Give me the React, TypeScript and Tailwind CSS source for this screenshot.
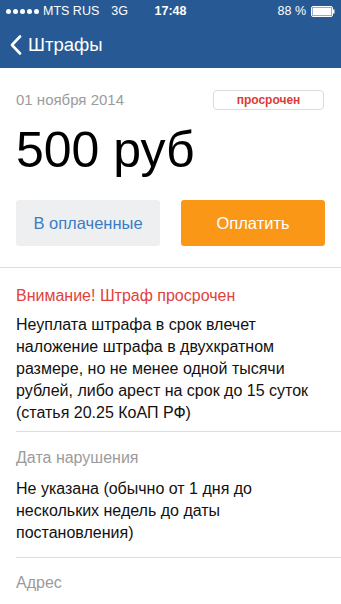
import React from "react";

export default function App() {
  return (
    <div className="w-[341px] min-h-[604px] bg-white overflow-hidden font-['Liberation_Sans','Arimo',Arial,Helvetica,sans-serif]">
      <div className="bg-[#275a94] h-[68px] text-white">
        <div className="relative h-[22px] flex items-center px-[6px] text-[12.5px]">
          <div className="flex items-center gap-[2px]">
            {[0, 1, 2, 3, 4].map((i) => (
              <span key={i} className="block w-[5px] h-[5px] rounded-full bg-white" />
            ))}
          </div>
          <span className="ml-[4px]">MTS RUS</span>
          <span className="ml-[12px]">3G</span>
          <span className="absolute left-1/2 -translate-x-1/2 font-bold">17:48</span>
          <div className="ml-auto flex items-center gap-[5px]">
            <span>88 %</span>
            <svg width="24" height="11" viewBox="0 0 24 11">
              <rect x="0.5" y="0.5" width="21" height="10" rx="1.5" fill="none" stroke="white" strokeWidth="1" />
              <rect x="1.5" y="1.5" width="19" height="8" fill="white" />
              <rect x="22" y="3.5" width="1.5" height="4" fill="white" />
            </svg>
          </div>
        </div>
        <div className="h-[46px] flex items-center pl-[10px]">
          <svg width="12" height="20" viewBox="0 0 12 20" className="mr-[6px]">
            <path d="M10 1.5 L2 10 L10 18.5" fill="none" stroke="white" strokeWidth="2.6" strokeLinecap="round" strokeLinejoin="round" />
          </svg>
          <span className="text-[18.5px]">Штрафы</span>
        </div>
      </div>

      <div className="px-4 pt-[22px]">
        <div className="flex items-center justify-between h-[20px]">
          <span className="text-[15px] text-[#9b9b9b]">01 ноября 2014</span>
          <span className="w-[111px] h-[20px] mr-[1px] rounded-[4px] border border-[#dcdcdc] flex items-center justify-center text-[12px] font-bold text-[#dd3b35]">
            просрочен
          </span>
        </div>
        <div className="mt-[15px] text-[50px] leading-[50px] text-black">500 руб</div>
        <div className="mt-[25px] grid grid-cols-2 gap-[21px]">
          <div className="h-[46px] rounded-[3px] bg-[#eeeff1] flex items-center justify-center text-[16.5px] text-[#3a7dc4]">
            В оплаченные
          </div>
          <div className="h-[46px] rounded-[3px] bg-[#fb9717] flex items-center justify-center text-[16.5px] text-white">
            Оплатить
          </div>
        </div>
      </div>

      <div className="mt-[21px] border-t border-[#dedede]" />

      <div className="pl-4">
        <div className="pr-4 pt-[17px] pb-[7px] text-[16px] leading-[22px]">
          <div className="text-[#e2423b]">Внимание! Штраф просрочен</div>
          <div className="mt-[7px] text-[#111]">
            Неуплата штрафа в срок влечет наложение штрафа в двухкратном размере, но не менее одной тысячи рублей, либо арест на срок до 15 суток (статья 20.25 КоАП РФ)
          </div>
        </div>
        <div className="border-t border-[#dedede]" />
        <div className="pr-4 pt-[15px] pb-[13px] text-[16px] leading-[22px]">
          <div className="text-[#9b9b9b]">Дата нарушения</div>
          <div className="mt-[9px] text-[#111]">
            Не указана (обычно от 1 дня до нескольких недель до даты постановления)
          </div>
        </div>
        <div className="border-t border-[#dedede]" />
        <div className="pr-4 pt-[14px] text-[16px] leading-[22px]">
          <div className="text-[#9b9b9b]">Адрес</div>
        </div>
      </div>
    </div>
  );
}
